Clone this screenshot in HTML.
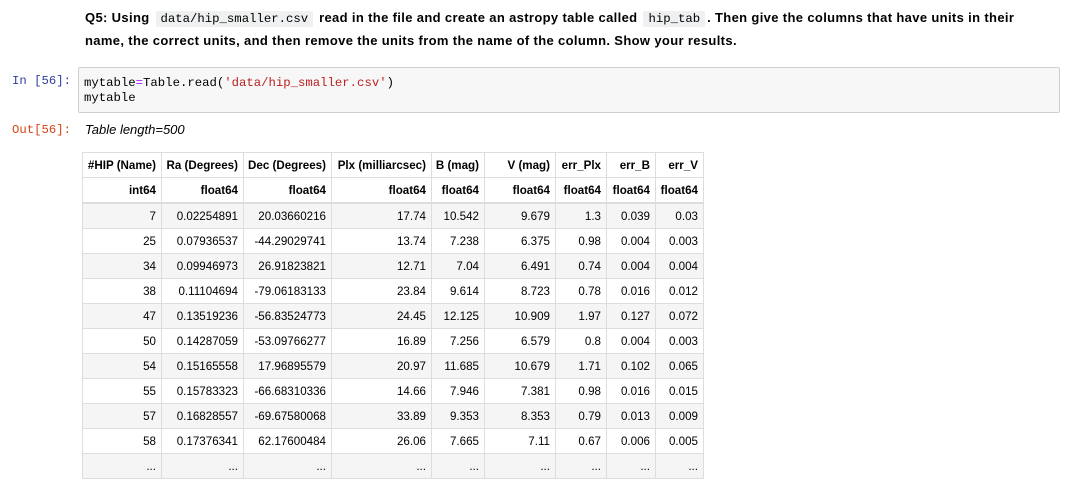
<!DOCTYPE html>
<html><head><style>
body{margin:0;width:1075px;height:475px;overflow:hidden;background:#fff;font-family:"Liberation Sans",Arial,sans-serif;color:#000;position:relative}
.q{position:absolute;left:85px;top:7px;font-size:13px;font-weight:bold;line-height:22px;width:950px;letter-spacing:0.35px}
.q code{font-family:"Liberation Mono",monospace;font-weight:normal;background:#eff0f1;padding:1px 5px;margin:0 2px;font-size:12.3px;border-radius:2px;letter-spacing:0}
.p{position:absolute;font-family:"Liberation Mono",monospace;font-size:12.3px;text-align:right;width:71px;left:0}
.cell{position:absolute;left:78px;top:67px;width:982px;height:46px;background:#f7f7f7;border:1px solid #cfcfcf;border-radius:2px;box-sizing:border-box;font-family:"Liberation Mono",monospace;font-size:12.3px;line-height:15px;padding:8px 5px}
.out{position:absolute;left:85px;top:122px;font-style:italic;font-size:13px}
table{position:absolute;left:82px;top:152px;width:621px;border-collapse:collapse;font-size:11.6px;table-layout:fixed}
td,th{border:1px solid #ddd;text-align:right;padding:0 5px 0 0;height:24px;white-space:nowrap;overflow:hidden}
th{font-weight:bold}
tr.t td{font-weight:bold;border-bottom:2px solid #ddd}
tr.s td{background:#f5f5f5}
</style></head><body>
<div class="q">Q5: Using <code>data/hip_smaller.csv</code> read in the file and create an astropy table called <code>hip_tab</code>. Then give the columns that have units in their<br>name, the correct units, and then remove the units from the name of the column. Show your results.</div>
<div class="p" style="top:74px;color:#303F9F">In [56]:</div>
<div class="cell">mytable<span style="color:#aa22ff">=</span>Table.read(<span style="color:#ba2121">'data/hip_smaller.csv'</span>)<br>mytable</div>
<div class="p" style="top:123px;color:#D84315">Out[56]:</div>
<div class="out">Table length=500</div>
<table>
<colgroup><col style="width:79px"><col style="width:82px"><col style="width:88px"><col style="width:100px"><col style="width:53px"><col style="width:71px"><col style="width:51px"><col style="width:49px"><col style="width:48px"></colgroup>
<tr><th>#HIP (Name)</th><th>Ra (Degrees)</th><th>Dec (Degrees)</th><th>Plx (milliarcsec)</th><th>B (mag)</th><th>V (mag)</th><th>err_Plx</th><th>err_B</th><th>err_V</th></tr>
<tr class="t"><td>int64</td><td>float64</td><td>float64</td><td>float64</td><td>float64</td><td>float64</td><td>float64</td><td>float64</td><td>float64</td></tr>
<tr class="s"><td>7</td><td>0.02254891</td><td>20.03660216</td><td>17.74</td><td>10.542</td><td>9.679</td><td>1.3</td><td>0.039</td><td>0.03</td></tr>
<tr><td>25</td><td>0.07936537</td><td>-44.29029741</td><td>13.74</td><td>7.238</td><td>6.375</td><td>0.98</td><td>0.004</td><td>0.003</td></tr>
<tr class="s"><td>34</td><td>0.09946973</td><td>26.91823821</td><td>12.71</td><td>7.04</td><td>6.491</td><td>0.74</td><td>0.004</td><td>0.004</td></tr>
<tr><td>38</td><td>0.11104694</td><td>-79.06183133</td><td>23.84</td><td>9.614</td><td>8.723</td><td>0.78</td><td>0.016</td><td>0.012</td></tr>
<tr class="s"><td>47</td><td>0.13519236</td><td>-56.83524773</td><td>24.45</td><td>12.125</td><td>10.909</td><td>1.97</td><td>0.127</td><td>0.072</td></tr>
<tr><td>50</td><td>0.14287059</td><td>-53.09766277</td><td>16.89</td><td>7.256</td><td>6.579</td><td>0.8</td><td>0.004</td><td>0.003</td></tr>
<tr class="s"><td>54</td><td>0.15165558</td><td>17.96895579</td><td>20.97</td><td>11.685</td><td>10.679</td><td>1.71</td><td>0.102</td><td>0.065</td></tr>
<tr><td>55</td><td>0.15783323</td><td>-66.68310336</td><td>14.66</td><td>7.946</td><td>7.381</td><td>0.98</td><td>0.016</td><td>0.015</td></tr>
<tr class="s"><td>57</td><td>0.16828557</td><td>-69.67580068</td><td>33.89</td><td>9.353</td><td>8.353</td><td>0.79</td><td>0.013</td><td>0.009</td></tr>
<tr><td>58</td><td>0.17376341</td><td>62.17600484</td><td>26.06</td><td>7.665</td><td>7.11</td><td>0.67</td><td>0.006</td><td>0.005</td></tr>
<tr class="s"><td>...</td><td>...</td><td>...</td><td>...</td><td>...</td><td>...</td><td>...</td><td>...</td><td>...</td></tr>
</table>
</body></html>
